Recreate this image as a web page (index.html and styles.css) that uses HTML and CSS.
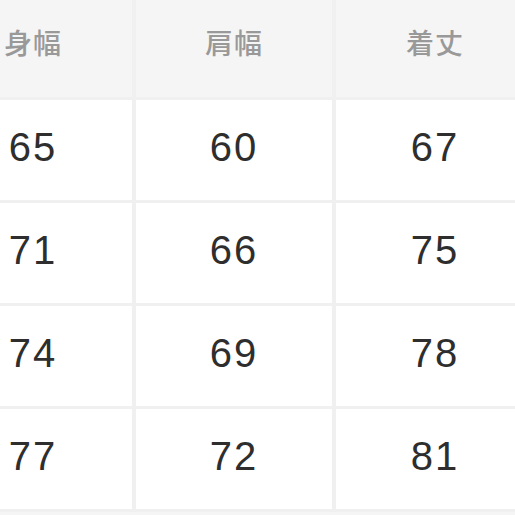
FILE: index.html
```html
<!DOCTYPE html>
<html lang="ja">
<head>
<meta charset="utf-8">
<link rel="stylesheet" href="styles.css">
</head>
<body>
<div class="sheet">
  <div class="size-table">
    <div class="cell head">身幅</div>
    <div class="cell head">肩幅</div>
    <div class="cell head">着丈</div>
    <div class="cell">65</div>
    <div class="cell">60</div>
    <div class="cell">67</div>
    <div class="cell">71</div>
    <div class="cell">66</div>
    <div class="cell">75</div>
    <div class="cell">74</div>
    <div class="cell">69</div>
    <div class="cell">78</div>
    <div class="cell">77</div>
    <div class="cell">72</div>
    <div class="cell">81</div>
  </div>
</div>
</body>
</html>
```
FILE: styles.css
```css
html, body {
  margin: 0;
  padding: 0;
  background: #f5f5f5;
  overflow: hidden;
}
.sheet {
  width: 515px;
  height: 515px;
  overflow: hidden;
}
.size-table {
  display: grid;
  grid-template-columns: 198px 196px 198px;
  grid-template-rows: 97px repeat(4, 100px);
  column-gap: 4px;
  row-gap: 3px;
  margin-left: -66px;
  width: 604px;
  background: #f0f0f0;
  padding-bottom: 3px;
  font-family: "Liberation Sans", "Noto Sans CJK JP", sans-serif;
}
.cell {
  background: #ffffff;
  color: #2e2e2e;
  font-size: 40px;
  letter-spacing: 2px;
  display: flex;
  align-items: center;
  justify-content: center;
  padding-bottom: 5px;
}
.cell.head {
  background: #f5f5f5;
  color: #999999;
  font-family: "Noto Sans CJK JP", sans-serif;
  font-weight: 500;
  font-size: 28px;
  letter-spacing: 1px;
  padding-bottom: 14px;
}
```
